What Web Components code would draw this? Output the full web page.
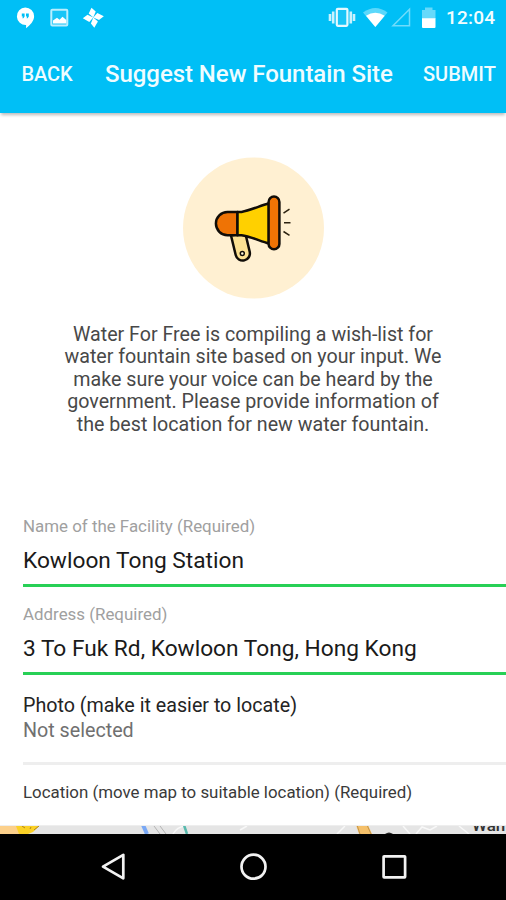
<!DOCTYPE html>
<html lang="en">
<head>
<meta charset="utf-8">
<title>Suggest New Fountain Site</title>
<style>
html,body{margin:0;padding:0;background:#fff}
body{font-family:Roboto,sans-serif;width:506px;height:900px;overflow:hidden}
</style>
</head>
<body>
<fountain-app></fountain-app>
<script>
const define = (name, markup) => customElements.define(name, class extends HTMLElement {
  constructor() {
    super();
    this.attachShadow({ mode: 'open' }).innerHTML = markup;
  }
});

define('status-bar', `
<style>
:host{display:flex;height:36px;background:#00bff6;color:#fff;justify-content:space-between}
svg{display:block}
.end{display:flex}
span{font:500 19px/36px Roboto,sans-serif;letter-spacing:.2px;width:60px;color:#f3fdff}
</style>
<svg width="110" height="36" viewBox="0 0 110 36">
 <path fill="#fff" d="M25.3 7.500a8.800 8.800 0 0 1 8.800 8.800c0 5-4 8.700-8 11.900v-3.100a8.800 8.800 0 1 1-.8-17.600z"/>
 <path fill="#00bff6" d="M21.800 13.500h2.800v3l-1.200 1.700h-1l.5-1.700h-1.100zM26 13.500h2.800v3l-1.200 1.700h-1l.5-1.700H26z"/>
 <rect x="51.300" y="9.800" width="16" height="15.800" rx="1" fill="#18c5f7" stroke="#b9eefe" stroke-width="2"/>
 <path fill="#fff" d="M53 20.500l4-2.700 2.500 2 3-3 3.800 3.300v3.500H53z"/>
 <g fill="#fff"><path id="blade" d="M93.300 17.500L88.700 13.500 91.500 7.800 95.700 11.500z"/>
 <path d="M93.300 17.500L97.300 12.900 103.800 16.300 99 19.900z"/>
 <path d="M93.300 17.500L97.900 21.500 94.300 27.700 90.900 23.500z"/>
 <path d="M93.300 17.500L89.300 22.100 82.800 18.200 87.500 14.800z"/></g>
</svg>
<div class="end">
<svg width="118" height="36" viewBox="328 0 118 36">
 <path d="M330 14v7M333.200 11.500v12M350.800 11.500v12M354 14v7" stroke="#c9f2fe" stroke-width="2.600" fill="none"/>
 <rect x="336.800" y="8.800" width="10.600" height="17" rx="1" fill="#18c5f7" stroke="#e5f9ff" stroke-width="2.200"/>
 <path fill="#5bd8fb" d="M363 12.500q12.500-9 24.500 0L375.300 27z"/>
 <path fill="#fff" d="M366 15.700q9.300-6 18.700 0L375.300 27z"/>
 <path d="M393 25.700h16.500V9.300z" fill="none" stroke="#6fdcfb" stroke-width="1.500"/>
 <path fill="#66d9fa" d="M422 10h3V7.500h7.500V10h3v9H422z"/>
 <path fill="#fff" d="M422 18.300h13.500V27q0 1-1 1H423q-1 0-1-1z"/>
</svg><span>12:04</span></div>`);

define('title-bar', `
<style>
:host{display:grid;grid-template-columns:105px 1fr 83px;align-items:center;height:76.500px;background:#00bff6;color:#effcff;
 box-shadow:0 3px 3px -1px #0004;white-space:nowrap;font:500 20px/24px Roboto,sans-serif}
.back{padding-left:21.500px;letter-spacing:-.1px}
.title{font-size:24px;letter-spacing:-.05px}
</style>
<span class="back"><slot name="back"></slot></span>
<span class="title"><slot></slot></span>
<span class="submit"><slot name="submit"></slot></span>`);

define('megaphone-badge', `
<style>:host{display:block;width:142px;height:142px}svg{display:block}</style>
<svg width="142" height="142" viewBox="182 157 142 142">
 <circle cx="253.500" cy="228" r="70.500" fill="#fff0d2"/>
 <g stroke="#110d08" stroke-width="2.500" stroke-linejoin="round" stroke-linecap="round">
 <path fill="#fce193" d="M231 235.500l4.700 19.500a7 7 0 0 0 14-3.200l-4.500-19z"/>
 <circle cx="242.300" cy="253.500" r="2" fill="#fff6d8" stroke-width="1.500"/>
 <path fill="#ef7305" d="M237.500 212H227.500a11.600 11.600 0 0 0 0 23.200H237.500z"/>
 <path fill="#ffd000" d="M237.500 212h4c9-1.700 18-6 27.500-8.700v40.300c-9.500-2.700-18-7-27.500-8.400h-4z"/>
 <rect x="268.600" y="196.500" width="10.800" height="52.800" rx="5.400" fill="#ef7305"/>
 </g>
 <path d="M283.500 213.200l6-4M284 222.700h6.500M283.500 231.500l6 3.800" stroke="#2c2210" stroke-width="1.500" fill="none"/>
</svg>`);

define('intro-text', `<style>:host{display:block;text-align:center;white-space:pre-line;font:400 19.650px/22.400px Roboto,sans-serif;color:#484848}</style><slot></slot>`);

define('text-field', `
<style>
:host{display:flex;flex-direction:column;height:88.500px;box-sizing:border-box;border-bottom:3px solid #28d056;white-space:nowrap}
.label{font-size:16.900px;line-height:20px;color:#a0a0a0;padding-top:17.900px}
.value{font-size:22.700px;line-height:28px;color:#1a1a1a;padding-top:11.100px}
</style>
<span class="label"><slot name="label"></slot></span>
<span class="value"><slot></slot></span>`);

define('photo-row', `
<style>
:host{display:flex;flex-direction:column;box-sizing:border-box;height:89.500px;padding-top:17.500px;border-bottom:3px solid #eee;
font:400 19.700px/25.500px Roboto,sans-serif;color:#242424;white-space:nowrap}
.state{color:#707070}
</style>
<span class="name"><slot></slot></span><span class="state"><slot name="state"></slot></span>`);

define('map-strip', `
<style>:host{display:block;height:9px;overflow:hidden}svg{display:block}</style>
<svg width="506" height="9" viewBox="0 825 506 9">
 <rect y="825" width="506" height="9" fill="#e5e5e5"/>
 <path fill="#fcd08b" d="M0 826h22v8H0z"/>
 <path fill="#fbd126" d="M16 826h23l-6 6-5 2h-9z"/>
 <path d="M22 826l3 2M30 829l1-2M34 830l5-4" stroke="#b08420" fill="none"/>
 <path d="M143 825l4 9" stroke="#79a8f5" stroke-width="4"/>
 <path d="M154 826l6 8M160 826l6 8" stroke="#b3b3b3" fill="none"/>
 <path d="M173 834q4-7 12-8M240 830l7-4M337 834l8-8M403 826l7 8M416 834l6-7 8 3 7-4M459 826l10 8" stroke="#f8f8f8" stroke-width="1.500" fill="none"/>
 <path d="M184 825l3 9" stroke="#58b9ad" stroke-width="2.500"/>
 <path fill="#f5c06a" d="M356 825h12l4 9h-13z"/><path d="M357 825l3 9M367 825l4 9" stroke="#c2954a" fill="none"/>
 <path d="M385 834q4-3 8 0z" fill="#222"/>
 <text x="472" y="831" font-family="Roboto,sans-serif" font-size="17" font-weight="500" fill="#333">Wan</text>
 <path d="M0 825.500h506" stroke="#eee"/>
</svg>`);

define('nav-bar', `
<style>:host{display:block;height:66px;background:#000}svg{display:block}</style>
<svg width="506" height="66" viewBox="0 834 506 66" fill="none" stroke="#f2f2f2" stroke-width="2.700" stroke-linejoin="round">
 <path d="M123.300 854.800v23.500L103 866.600z"/>
 <circle cx="253.500" cy="866.700" r="12"/>
 <rect x="383.600" y="856.300" width="21.500" height="21" rx=".5"/>
</svg>`);

define('fountain-app', `
<style>
:host{display:flex;flex-direction:column;width:506px;height:900px;background:#fff;font-family:Roboto,sans-serif}
main{flex:1;min-height:0;display:flex;flex-direction:column}
.hero{display:flex;flex-direction:column;align-items:center;gap:25px;padding-top:44.500px;height:341px}
.form{padding-left:23px}
.location{font-size:16.870px;line-height:24px;color:#3a3a3a;padding-top:15px;box-sizing:border-box;height:60px;white-space:nowrap}
</style>
<status-bar></status-bar>
<title-bar><span slot="back">BACK</span>Suggest New Fountain Site<span slot="submit">SUBMIT</span></title-bar>
<main>
<div class="hero"><megaphone-badge></megaphone-badge>
<intro-text>Water For Free is compiling a wish-list for
water fountain site based on your input. We
make sure your voice can be heard by the
government. Please provide information of
the best location for new water fountain.</intro-text></div>
<div class="form">
<text-field><span slot="label">Name of the Facility (Required)</span>Kowloon Tong Station</text-field>
<text-field><span slot="label">Address (Required)</span>3 To Fuk Rd, Kowloon Tong, Hong Kong</text-field>
<photo-row>Photo (make it easier to locate)<span slot="state">Not selected</span></photo-row>
<div class="location">Location (move map to suitable location) (Required)</div>
</div>
</main>
<map-strip></map-strip>
<nav-bar></nav-bar>`);
</script>
</body>
</html>
